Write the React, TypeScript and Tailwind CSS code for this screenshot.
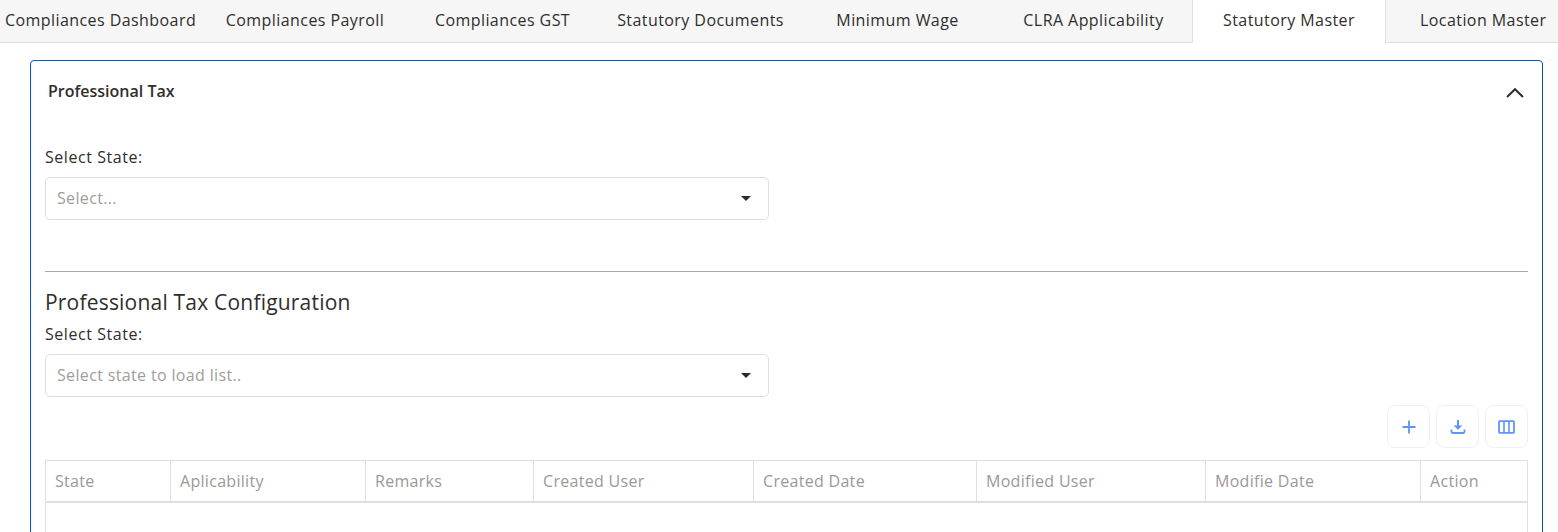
import React from "react";

const font = "[font-family:'Open_Sans',Lato,sans-serif]";

const tabs: { label: string; cls: string }[] = [
  { label: "Compliances Dashboard", cls: "w-[206px] pl-[5px] justify-start" },
  { label: "Compliances Payroll", cls: "w-[198px] justify-center" },
  { label: "Compliances GST", cls: "w-[197px] justify-center" },
  { label: "Statutory Documents", cls: "w-[199px] justify-center" },
  { label: "Minimum Wage", cls: "w-[195px] justify-center" },
  { label: "CLRA Applicability", cls: "w-[197px] justify-center" },
];

const cols = [
  { label: "State", cls: "w-[125px]" },
  { label: "Aplicability", cls: "w-[195px]" },
  { label: "Remarks", cls: "w-[168px]" },
  { label: "Created User", cls: "w-[220px]" },
  { label: "Created Date", cls: "w-[223px]" },
  { label: "Modified User", cls: "w-[229px]" },
  { label: "Modifie Date", cls: "w-[215px]" },
  { label: "Action", cls: "flex-1" },
];

function Select({ placeholder }: { placeholder: string }) {
  return (
    <div className="flex h-[43px] w-[724px] items-center justify-between rounded-[5px] border border-[#dedede] pl-[11px] pr-[17px]">
      <span className="pb-[2px] text-[16px] tracking-[0.35px] text-[#a09d9b]">{placeholder}</span>
      <svg width="10" height="5" viewBox="0 0 10 5"><path d="M0 0h10L5 5z" fill="#2b2b2b" /></svg>
    </div>
  );
}

function IconButton({ children }: { children: React.ReactNode }) {
  return (
    <button className="flex h-[43px] w-[43px] items-center justify-center rounded-[8px] border border-[#eef0f6] bg-white text-[#5c94fa]">
      {children}
    </button>
  );
}

export default function App() {
  return (
    <div className={`h-[532px] w-[1558px] overflow-hidden bg-white text-[#2f2e2d] ${font}`}>
      <div className="flex h-[43px] border-b border-[#dfdfdf] bg-[#f6f6f6] text-[16px] tracking-[0.43px]">
        {tabs.map((t) => (
          <div key={t.label} className={`flex shrink-0 items-center pb-[2px] ${t.cls}`}>{t.label}</div>
        ))}
        <div className="flex h-[43px] w-[194px] shrink-0 items-center justify-center border-x border-[#dfdfdf] bg-white pb-[3px]">Statutory Master</div>
        <div className="flex flex-1 items-center pb-[2px] pl-[34px]">Location Master</div>
      </div>

      <div className="ml-[30px] mt-[17px] h-[600px] w-[1513px] rounded-[4px] border border-[#0058c9] pl-[14px] pr-[14px]">
        <div className="flex h-[60px] items-center justify-between pl-[3px] pr-[4px]">
          <span className="text-[16px] font-semibold">Professional Tax</span>
          <svg className="mt-[3px]" width="18" height="11" viewBox="0 0 18 11" fill="none"><path d="M1 10L9 2.2 17 10" stroke="#2f2e2d" strokeWidth="2" /></svg>
        </div>
        <div className="mt-[26px] h-[20px] text-[16px] leading-[20px] tracking-[0.55px]">Select State:</div>
        <div className="mt-[10px]"><Select placeholder="Select..." /></div>
        <div className="mt-[51px] border-t border-[#a9a9a9]" />
        <div className="mt-[16px] h-[28px] text-[21px] leading-[28px] tracking-[0.2px]">Professional Tax Configuration</div>
        <div className="mt-[8px] h-[20px] text-[16px] leading-[20px] tracking-[0.55px]">Select State:</div>
        <div className="mt-[10px]"><Select placeholder="Select state to load list.." /></div>
        <div className="mt-[8px] flex justify-end gap-[6px]">
          <IconButton>
            <svg width="16" height="16" viewBox="0 0 16 16" fill="none" stroke="currentColor" strokeWidth="1.8"><path d="M8 1.5v13M1.5 8h13" /></svg>
          </IconButton>
          <IconButton>
            <svg width="16" height="16" viewBox="0 0 16 16" fill="none"><path d="M8 1v8" stroke="currentColor" strokeWidth="2" /><path d="M3.6 6.4h8.8L8 10.8z" fill="currentColor" /><path d="M1.5 10.5v2.2a1.3 1.3 0 0 0 1.3 1.3h10.4a1.3 1.3 0 0 0 1.3-1.3v-2.2" stroke="currentColor" strokeWidth="1.8" /></svg>
          </IconButton>
          <IconButton>
            <svg width="17" height="14" viewBox="0 0 17 14" fill="none" stroke="currentColor" strokeWidth="1.8"><rect x="1" y="1.2" width="15" height="11.6" rx="0.8" /><path d="M6 1.2v11.6M11 1.2v11.6" strokeWidth="1.6" /></svg>
          </IconButton>
        </div>
        <div className="mt-[12px] h-[200px] border border-[#dfdfdf]">
          <div className="flex h-[42px] border-b-2 border-[#dfdfdf]">
            {cols.map((c, i) => (
              <div key={c.label} className={`flex items-center pl-[9px] text-[16px] tracking-[0.3px] text-[#9b9997] ${c.cls} ${i < cols.length - 1 ? "border-r border-[#dfdfdf]" : ""}`}>{c.label}</div>
            ))}
          </div>
        </div>
      </div>
    </div>
  );
}
